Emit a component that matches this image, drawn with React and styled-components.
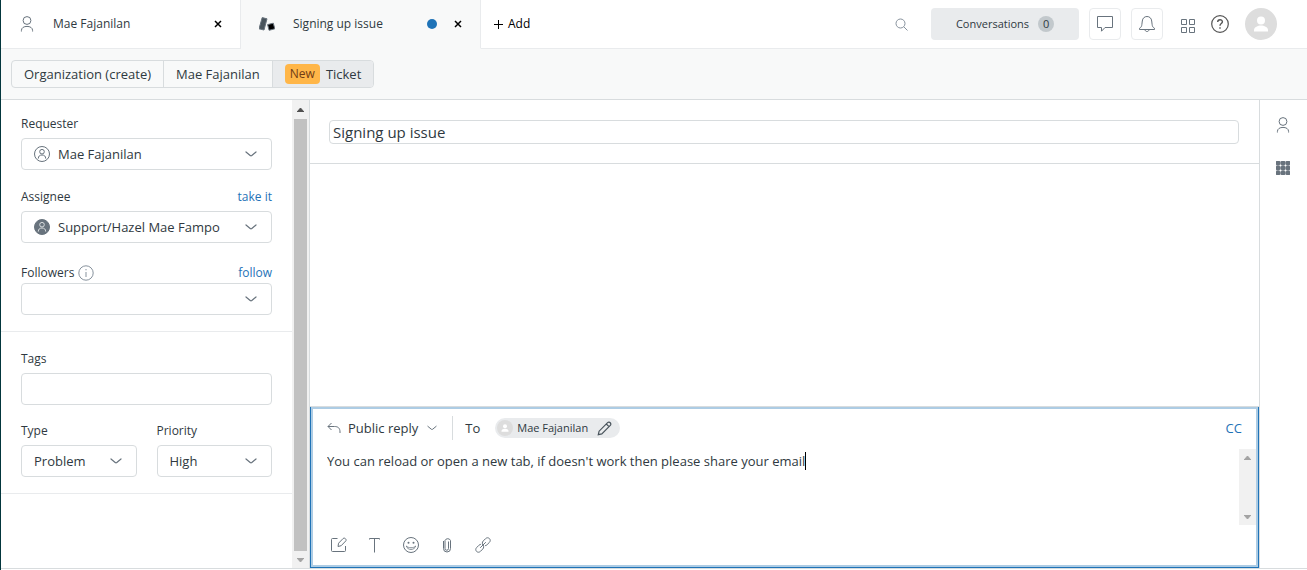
import React from 'react';
import styled, { createGlobalStyle } from 'styled-components';

const GlobalStyle = createGlobalStyle`
  * {
    box-sizing: border-box;
  }

  body {
    margin: 0;
    background: #fff;
    color: #2f3941;
    font-family: 'Open Sans', 'Noto Sans', sans-serif;
    font-size: 13px;
    line-height: 20px;
  }

  button, input, select, textarea {
    font: inherit;
    color: inherit;
  }
`;

const Page = styled.div`
  display: flex;
  flex-direction: column;
  height: 100vh;
  border-left: 1px solid #03363d;
`;

const IconButton = styled.button`
  display: flex;
  align-items: center;
  justify-content: center;
  padding: 0;
  border: 0;
  background: none;
  color: ${({ $color }) => $color || '#68737d'};
`;

const Svg = styled.svg`
  display: block;
  flex: none;
  fill: none;
  stroke: currentColor;
`;

/* top bar */

const TopBar = styled.header`
  display: flex;
  flex: none;
  height: 49px;
`;

const Tab = styled.div`
  display: flex;
  align-items: center;
  width: 240px;
  padding: 0 16px 0 18px;
  border-right: 1px solid #e9ebed;
  border-bottom: 1px solid ${({ $active }) => ($active ? '#f8f9f9' : '#e9ebed')};
  background: ${({ $active }) => ($active ? '#f8f9f9' : '#fff')};
  color: #68737d;
`;

const TabTitle = styled.span`
  flex: 1;
  margin-left: 18px;
  color: #2f3941;
  font-size: 12px;
`;

const UnsavedDot = styled.span`
  width: 10px;
  height: 10px;
  margin-right: 15px;
  border-radius: 50%;
  background: #1f73b7;
`;

const TopRight = styled.div`
  display: flex;
  flex: 1;
  align-items: center;
  padding-right: 30px;
  border-bottom: 1px solid #e9ebed;
`;

const AddButton = styled.button`
  display: flex;
  align-items: center;
  gap: 5px;
  margin-right: auto;
  padding: 0 13px;
  border: 0;
  background: none;
  color: #000;
  font-size: 12px;
`;

const Conversations = styled.button`
  display: flex;
  align-items: center;
  justify-content: center;
  gap: 9px;
  width: 148px;
  height: 32px;
  margin-left: 23px;
  border: 0;
  border-radius: 4px;
  background: #e9ebed;
  font-size: 11px;
`;

const Count = styled.span`
  width: 16px;
  height: 16px;
  border-radius: 50%;
  background: #c2c8cc;
  line-height: 16px;
  text-align: center;
`;

const BoxButton = styled(IconButton)`
  width: 32px;
  height: 32px;
  margin-left: 10px;
  border: 1px solid #e9ebed;
  border-radius: 4px;
`;

const TopIcons = styled.div`
  display: flex;
  align-items: center;
  gap: 16px;
  margin-left: 18px;
`;

const Avatar = styled.span`
  display: flex;
  align-items: center;
  justify-content: center;
  width: ${({ $size }) => $size}px;
  height: ${({ $size }) => $size}px;
  border-radius: 50%;
  background: #ddd;
  color: #fff;
`;

/* breadcrumbs */

const CrumbBar = styled.nav`
  display: flex;
  flex: none;
  align-items: center;
  height: 51px;
  padding: 0 10px;
  border-bottom: 1px solid #d8dcde;
  background: #f8f9f9;
`;

const Crumbs = styled.div`
  display: flex;
  height: 28px;
  overflow: hidden;
  border: 1px solid #d8dcde;
  border-radius: 4px;
`;

const Crumb = styled.a`
  display: flex;
  align-items: center;
  gap: 6px;
  padding: 0 12px;
  background: ${({ $active }) => ($active ? '#e9ebed' : 'transparent')};
  color: #2f3941;
  text-decoration: none;

  & + & {
    border-left: 1px solid #d8dcde;
  }
`;

const NewBadge = styled.span`
  padding: 0 5px;
  border-radius: 4px;
  background: #ffb648;
  color: #703b15;
  font-size: 12px;
`;

/* sidebar */

const Content = styled.div`
  display: flex;
  flex: 1;
  min-height: 0;
  margin-bottom: 1px;
  border-bottom: 1px solid #d8dcde;
`;

const Sidebar = styled.aside`
  display: flex;
  flex: none;
  width: 309px;
  border-right: 1px solid #d8dcde;
`;

const Fields = styled.form`
  flex: 1;
  padding-top: 14px;
`;

const FieldGroup = styled.div`
  display: flex;
  flex-direction: column;
  gap: 17px;
  padding: 0 20px 16px;
  border-bottom: 1px solid #e9ebed;

  & + & {
    gap: 16px;
    padding-top: 17px;
  }
`;

const FieldRow = styled.div`
  display: flex;
  gap: 20px;
`;

const Field = styled.div`
  flex: 1;
  min-width: 0;
`;

const LabelRow = styled.div`
  display: flex;
  align-items: center;
  justify-content: space-between;
  margin: ${({ $low }) => ($low ? '3px 0 0' : '0 0 4px')};
  font-size: 12px;
`;

const LabelWithIcon = styled.span`
  display: flex;
  align-items: center;
  gap: 4px;
  color: #87929d;

  label {
    color: #2f3941;
  }
`;

const FieldLink = styled.a`
  color: #1f73b7;
  text-decoration: none;
`;

const SelectWrap = styled.div`
  position: relative;
  color: #68737d;
`;

const Select = styled.select`
  display: block;
  width: 100%;
  height: 32px;
  padding: 0 32px 0 ${({ $icon }) => ($icon ? 36 : 12)}px;
  border: 1px solid #d8dcde;
  border-radius: 4px;
  background: #fff;
  color: #2f3941;
  appearance: none;
`;

const SelectIcon = styled.span`
  position: absolute;
  top: 8px;
  left: 13px;
  pointer-events: none;
`;

const SelectArrow = styled.span`
  position: absolute;
  top: 10px;
  right: 15px;
  pointer-events: none;
`;

const TextInput = styled.input`
  display: block;
  width: 100%;
  height: 32px;
  padding: 0 12px;
  border: 1px solid #d8dcde;
  border-radius: 4px;
`;

/* scroll bars */

const ScrollTrack = styled.div`
  display: flex;
  flex: none;
  flex-direction: column;
  align-items: center;
  justify-content: space-between;
  width: 17px;
  background: #f1f1f1;
`;

const ScrollEnd = styled.span`
  display: flex;
  align-items: center;
  justify-content: center;
  width: 17px;
  height: ${({ $dark }) => ($dark ? 19 : 17)}px;
  color: ${({ $dark }) => ($dark ? '#505050' : '#a3a3a3')};
`;

const ScrollThumb = styled.span`
  flex: 1;
  width: 13px;
  background: #c1c1c1;
`;

/* ticket */

const Ticket = styled.main`
  display: flex;
  flex: 1;
  flex-direction: column;
  min-width: 0;
`;

const SubjectBar = styled.div`
  padding: 20px 20px 19px 19px;
  border-bottom: 1px solid #d8dcde;
`;

const Subject = styled.input`
  display: block;
  width: 100%;
  height: 24px;
  padding: 0 3px;
  border: 1px solid #d8dcde;
  border-radius: 4px;
  font-size: 15px;
`;

const Log = styled.section`
  flex: 1;
  border-bottom: 1px solid #d8dcde;
`;

const Composer = styled.form`
  display: flex;
  flex: none;
  flex-direction: column;
  padding-top: 7px;
  border: solid #1f73b7;
  border-width: 0 1px 1px;
  box-shadow: inset 0 0 0 2px #adcce4;
`;

const ComposerHead = styled.div`
  display: flex;
  align-items: center;
  height: 28px;
  padding: 0 16px;
`;

const ReplyType = styled(IconButton)`
  height: 24px;
  padding-right: 15px;

  span {
    margin: 0 9px 0 7px;
    color: #2f3941;
  }
`;

const To = styled.span`
  padding: 2px 15px 2px 12px;
  border-left: 1px solid #d8dcde;
`;

const Recipient = styled.span`
  display: flex;
  align-items: center;
  height: 20px;
  padding: 0 8px 0 2px;
  border-radius: 10px;
  background: #e9ebed;
  color: #49545c;
  font-size: 11px;

  b {
    margin: 0 9px 0 4px;
    color: #2f3941;
    font-weight: 400;
  }
`;

const CcLink = styled(FieldLink)`
  margin-left: auto;
`;

const ComposerBody = styled.div`
  display: flex;
  height: 76px;
  margin: 7px 2px 0 16px;
`;

const Message = styled.textarea`
  field-sizing: content;
  max-width: 880px;
  height: 76px;
  padding: 2px 0;
  border: 0;
  outline: 0;
  resize: none;
  overflow: hidden;
`;

const Caret = styled.span`
  width: 1px;
  height: 18px;
  margin: 3px auto 0 0;
  background: #000;
`;

const Toolbar = styled.div`
  display: flex;
  gap: 16px;
  padding: 10px 18px 12px;
`;

const ToolButton = styled(IconButton)`
  width: 20px;
  height: 20px;
`;

const Rail = styled.aside`
  display: flex;
  flex: none;
  flex-direction: column;
  align-items: center;
  gap: 28px;
  width: 48px;
  padding: 17px 2px 0 0;
  border-left: 1px solid #d8dcde;
`;

const PersonIcon = () => (
  <Svg width="16" height="16" viewBox="0 0 16 16">
    <circle cx="8" cy="4.5" r="3.9" />
    <path d="M2.4 15.5v-.9C2.4 11.7 4.9 10.4 8 10.4s5.6 1.3 5.6 4.2v.9" />
  </Svg>
);

const CloseIcon = () => (
  <Svg width="12" height="12" viewBox="0 0 12 12" strokeWidth="1.5">
    <path d="M3 3l6 6M9 3L3 9" />
  </Svg>
);

const TicketIcon = () => (
  <Svg width="16" height="16" viewBox="0 0 16 16" stroke="none">
    <path d="M3.2 1.6L8 2.800 5 14 0 12.800z" fill="#49545c" />
    <path d="M8.600 8.600l5.700-1.400 1.500 5.600-5.700 1.500z" fill="#000" />
  </Svg>
);

const UserShape = ({ size }) => (
  <Svg width={size} height={size} viewBox="0 0 16 16">
    <circle cx="8" cy="4.5" r="4" fill="currentColor" stroke="none" />
    <path d="M1 15.500v-1.500c0-3 4-4.500 7-4.500s7 1.500 7 4.500v1.500z" fill="currentColor" stroke="none" />
  </Svg>
);

const CircleUserIcon = ({ filled }) => (
  <Svg width="16" height="16" viewBox="0 0 16 16">
    <circle cx="8" cy="8" r="7.5" fill={filled ? '#68737d' : 'none'} />
    <g stroke={filled ? '#d8dcde' : 'currentColor'}>
      <circle cx="8" cy="5.7" r="2.3" />
      <path d="M4.3 12.6c0-2.4 1.4-3.6 3.7-3.6s3.7 1.2 3.7 3.6" />
    </g>
  </Svg>
);

const ChevronIcon = ({ size = 12 }) => (
  <Svg width={size} height={size} viewBox="0 0 12 12" strokeWidth="1.2" strokeLinecap="round">
    <path d="M1 4l4.200 3.500c.5.4 1.100.4 1.600 0L11 4" />
  </Svg>
);

const Scrollbar = ({ thumb }) => (
  <ScrollTrack aria-hidden="true">
    <ScrollEnd $dark={thumb}>
      <Svg width="7" height="4" viewBox="0 0 7 4" stroke="none">
        <path d="M0 4l3.500-4L7 4z" fill="currentColor" />
      </Svg>
    </ScrollEnd>
    {thumb && <ScrollThumb />}
    <ScrollEnd>
      <Svg width="7" height="4" viewBox="0 0 7 4" stroke="none">
        <path d="M0 0l3.500 4L7 0z" fill="currentColor" />
      </Svg>
    </ScrollEnd>
  </ScrollTrack>
);

const SelectField = ({ id, label, value, icon, info, action, low }) => {
  return (
    <Field>
      <LabelRow $low={low}>
        <LabelWithIcon>
          <label htmlFor={id}>{label}</label>
          {info && (
            <Svg width="16" height="16" viewBox="0 0 16 16">
              <circle cx="8" cy="8" r="7.2" />
              <path d="M8 7v5M8 4v1.3" />
            </Svg>
          )}
        </LabelWithIcon>
        {action && <FieldLink href="#">{action}</FieldLink>}
      </LabelRow>
      <SelectWrap>
        <Select id={id} $icon={Boolean(icon)} defaultValue={value}>
          <option value={value}>{value}</option>
        </Select>
        {icon && <SelectIcon>{icon}</SelectIcon>}
        <SelectArrow>
          <ChevronIcon />
        </SelectArrow>
      </SelectWrap>
    </Field>
  );
};

const TopNav = () => (
  <TopBar>
    <Tab>
      <PersonIcon />
      <TabTitle>Mae Fajanilan</TabTitle>
      <IconButton $color="#000" aria-label="Close Mae Fajanilan"><CloseIcon /></IconButton>
    </Tab>
    <Tab $active>
      <TicketIcon />
      <TabTitle>Signing up issue</TabTitle>
      <UnsavedDot />
      <IconButton $color="#000" aria-label="Close ticket"><CloseIcon /></IconButton>
    </Tab>
    <TopRight>
      <AddButton>
        <Svg width="9" height="9" viewBox="0 0 9 9">
          <path d="M4.500 0v9M0 4.500h9" />
        </Svg>
        Add
      </AddButton>
      <IconButton $color="#87929d" aria-label="Search">
        <Svg width="13" height="13" viewBox="0 0 13 13">
          <circle cx="5.5" cy="5.5" r="4.5" />
          <path d="M8.800 8.800l3.700 3.700" />
        </Svg>
      </IconButton>
      <Conversations>
        Conversations
        <Count>0</Count>
      </Conversations>
      <BoxButton aria-label="Messages">
        <Svg width="18" height="18" viewBox="0 0 18 18">
          <path d="M1.500 1.500h15v11H9l-3.500 3.700v-3.700h-4z" />
        </Svg>
      </BoxButton>
      <BoxButton aria-label="Notifications">
        <Svg width="18" height="18" viewBox="0 0 18 18">
          <path d="M1.500 14.500h15v-1.200c-1.600-.8-2.200-2-2.400-4L13.700 6C13.400 3.200 11.500 1.500 9 1.500S4.600 3.200 4.300 6l-.4 3.300c-.2 2-.8 3.200-2.400 4z" />
          <path d="M7 14.500c0 2.700 4 2.700 4 0" />
        </Svg>
      </BoxButton>
      <TopIcons>
        <IconButton aria-label="Products">
          <Svg width="14" height="18" viewBox="0 0 14 18">
            <path d="M.5 4.500h5v5h-5zM8.500 4.500h5v5h-5zM.5 12.500h5v5h-5zM8.500 12.500h5v5h-5z" />
          </Svg>
        </IconButton>
        <IconButton $color="#555" aria-label="Help">
          <Svg width="18" height="18" viewBox="0 0 18 18" strokeWidth="1.2">
            <circle cx="9" cy="9" r="8.3" />
            <path d="M6.700 7c0-3 4.700-2.900 4.700-.2C11.400 8.600 9 8.500 9 10.700M9 12.200v1.500" strokeWidth="1.4" />
          </Svg>
        </IconButton>
        <Avatar $size={32}><UserShape size={16} /></Avatar>
      </TopIcons>
    </TopRight>
  </TopBar>
);

const ReplyBox = () => (
  <Composer>
    <ComposerHead>
      <ReplyType type="button">
        <Svg width="14" height="12" viewBox="0 0 14 12" stroke="#87929d">
          <path d="M4.500 1L1 4.500 4.500 8M1 4.500h6.500c3.500 0 5.500 1.500 5.500 5.500v1" />
        </Svg>
        <span>Public reply</span>
        <ChevronIcon size={10} />
      </ReplyType>
      <To>To</To>
      <Recipient>
        <Avatar $size={16}><UserShape size={8} /></Avatar>
        <b>Mae Fajanilan</b>
        <Svg width="15" height="15" viewBox="0 0 15 15" strokeWidth="1.2">
          <path d="M1.300 13.700l.8-3.500 8.500-8.500c1.700-1.700 4.400 1 2.700 2.700l-8.500 8.500zM9.300 3l2.700 2.700" />
        </Svg>
      </Recipient>
      <CcLink href="#">CC</CcLink>
    </ComposerHead>
    <ComposerBody>
      <Message
        aria-label="Reply"
        defaultValue="You can reload or open a new tab, if doesn't work then please share your email"
      />
      <Caret />
      <Scrollbar />
    </ComposerBody>
    <Toolbar>
      <ToolButton type="button" aria-label="Compose">
        <Svg width="16" height="16" viewBox="0 0 16 16">
          <path d="M6.500 1.500H1.500a1 1 0 0 0-1 1v11a1 1 0 0 0 1 1h12a1 1 0 0 0 1-1V9" />
          <path d="M7 9.500l.6-3.300 4.500-4.700c1.400-1.400 4 1.100 2.600 2.500L10.200 8.700z" />
        </Svg>
      </ToolButton>
      <ToolButton type="button" aria-label="Text format">
        <Svg width="12" height="16" viewBox="0 0 12 16">
          <path d="M.5 2.500v-1h10v1M5.500 1.500v14" />
        </Svg>
      </ToolButton>
      <ToolButton type="button" aria-label="Emoji">
        <Svg width="16" height="16" viewBox="0 0 16 16">
          <circle cx="8" cy="8" r="7.5" />
          <path d="M3.300 9c1.200 4.600 8.200 4.600 9.400 0-2 2.300-7.400 2.300-9.400 0z" strokeWidth=".8" />
          <circle cx="5.5" cy="5.8" r="1" fill="currentColor" stroke="none" />
          <circle cx="10.5" cy="5.8" r="1" fill="currentColor" stroke="none" />
        </Svg>
      </ToolButton>
      <ToolButton type="button" aria-label="Attach file">
        <Svg width="10" height="16" viewBox="0 0 10 16">
          <path d="M1.500 4v7.500a3.500 3.500 0 0 0 7 0V3.500a3 3 0 0 0-5.500 0v8a1.700 1.700 0 0 0 3.500 0V4.500" />
        </Svg>
      </ToolButton>
      <ToolButton type="button" aria-label="Insert link">
        <Svg width="16" height="16" viewBox="0 0 16 16">
          <path d="M8.600 8.600c-1.600-1.500-1.700-3.300-.3-4.700l2.200-2.200c2.700-2.700 6.500 1.100 3.800 3.800l-2.200 2.200c-.6.600-1.200.9-2 1" />
          <path d="M7.400 7.400c1.600 1.500 1.700 3.300.3 4.700l-2.200 2.200c-2.700 2.700-6.500-1.100-3.800-3.800l2.200-2.200c.6-.6 1.200-.9 2-1" />
          <path d="M5.200 10.800l5.600-5.600" />
        </Svg>
      </ToolButton>
    </Toolbar>
  </Composer>
);

const App = () => {
  return (
    <>
      <GlobalStyle />
      <Page>
        <TopNav />
        <CrumbBar>
          <Crumbs>
            <Crumb href="#">Organization (create)</Crumb>
            <Crumb href="#">Mae Fajanilan</Crumb>
            <Crumb href="#" $active>
              <NewBadge>New</NewBadge>
              Ticket
            </Crumb>
          </Crumbs>
        </CrumbBar>
        <Content>
          <Sidebar>
            <Fields>
              <FieldGroup>
                <SelectField id="requester" label="Requester" value="Mae Fajanilan" icon={<CircleUserIcon />} />
                <SelectField
                  id="assignee"
                  label="Assignee"
                  value="Support/Hazel Mae Fampo"
                  icon={<CircleUserIcon filled />}
                  action="take it"
                />
                <SelectField id="followers" label="Followers" value="" info action="follow" low />
              </FieldGroup>
              <FieldGroup>
                <Field>
                  <LabelRow>
                    <label htmlFor="tags">Tags</label>
                  </LabelRow>
                  <TextInput id="tags" />
                </Field>
                <FieldRow>
                  <SelectField id="type" label="Type" value="Problem" />
                  <SelectField id="priority" label="Priority" value="High" />
                </FieldRow>
              </FieldGroup>
            </Fields>
            <Scrollbar thumb />
          </Sidebar>
          <Ticket>
            <SubjectBar>
              <Subject aria-label="Subject" defaultValue="Signing up issue" />
            </SubjectBar>
            <Log />
            <ReplyBox />
          </Ticket>
          <Rail>
            <IconButton aria-label="Customer"><PersonIcon /></IconButton>
            <IconButton aria-label="Apps">
              <Svg width="14" height="14" viewBox="0 0 14 14" stroke="none">
                {[0, 5, 10].map((y) =>
                  [0, 5, 10].map((x) => (
                    <rect key={`${x}-${y}`} x={x} y={y} width="4" height="4" rx="1" fill="currentColor" />
                  ))
                )}
              </Svg>
            </IconButton>
          </Rail>
        </Content>
      </Page>
    </>
  );
};

export default App;
